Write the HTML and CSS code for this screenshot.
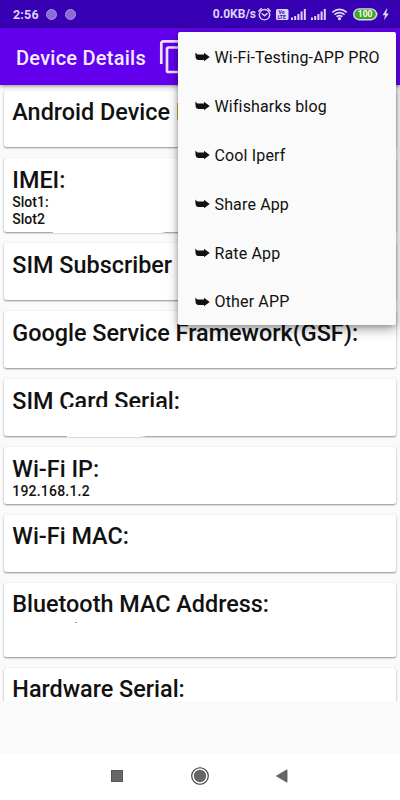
FILE: index.html
```
<!DOCTYPE html>
<html lang="en">
<head>
<meta charset="utf-8">
<title>Device Details</title>
<link rel="stylesheet" href="styles.css">
</head>
<body>
<div class="phone">
  <header class="status">
    <span class="time">2:56</span>
    <i class="dot"></i><i class="dot"></i>
    <span class="rate">0.0KB/s</span>
    <svg class="status-icons" viewBox="0 0 134 28" width="134" height="28">
      <g fill="none" stroke="#ddd5fb" stroke-width="1.4" stroke-linecap="round">
        <circle cx="6.500" cy="14.7" r="5.200"/>
        <path d="M.8 11 3.4 8.600M12.300 11 9.700 8.600M4.100 13.8 6.500 15.8 9.100 13.6"/>
      </g>
      <rect x="18" y="9" width="12.500" height="11" rx="1.500" fill="#ddd5fb"/>
      <g class="volte"><text x="20.500" y="14.300">Vo</text><text x="19.700" y="18.800">LTE</text></g>
      <g fill="#ddd5fb">
        <path d="M33 17.500h2V20h-2zM36.200 16h2v4h-2zM39.400 14h2v6h-2zM42.600 11.500h2V20h-2zM45.800 9h2v11h-2z"/>
        <path d="M53 17.500h2V20h-2zM56.200 16h2v4h-2zM59.400 14h2v6h-2zM62.600 11.500h2V20h-2zM65.800 9h2v11h-2z"/>
        <circle cx="81.500" cy="18.700" r="1.600"/>
        <path d="M128.500 8.800 124.500 15.200h2.600l-1.200 5 5-6.800h-2.800l1.200-4.600z"/>
      </g>
      <g fill="none" stroke="#ddd5fb" stroke-width="1.700">
        <path d="M74.200 12.300q7.300-5.800 14.600 0M76.400 14.600q5.100-4 10.200 0M78.600 16.800q2.900-2.200 5.800 0"/>
      </g>
      <rect x="95.700" y="8.900" width="22.800" height="10.800" rx="5.400" fill="#3eaa16" stroke="#ddd5fb" stroke-width="1.400"/>
      <path d="M119.500 12q1.200 2.200 0 4.400z" fill="#ddd5fb"/>
      <text class="level" x="107.100" y="17.400" text-anchor="middle">100</text>
    </svg>
  </header>
  <div class="appbar">
    <h1>Device Details</h1>
    <svg viewBox="0 0 30 36" width="30" height="36" fill="none" stroke="#ece2ff" stroke-width="2.700">
      <path d="M2.300 25V4.500q0-2.200 2.200-2.200H22"/><rect x="8" y="8.500" width="19" height="24.500" rx="1.500"/>
    </svg>
  </div>
  <main class="list">
    <section class="card"><h2>Android Device ID:</h2></section>
    <section class="card tall imei"><h2>IMEI:</h2><p>Slot1:</p><p>Slot2</p></section>
    <section class="card"><h2>SIM Subscriber ID:</h2></section>
    <section class="card"><h2>Google Service Framework(GSF):</h2></section>
    <section class="card sim"><h2>SIM Card Serial:</h2></section>
    <section class="card"><h2>Wi-Fi IP:</h2><p class="ip">192.168.1.2</p></section>
    <section class="card"><h2>Wi-Fi MAC:</h2></section>
    <section class="card tall speck"><h2>Bluetooth MAC Address:</h2></section>
    <section class="card"><h2>Hardware Serial:</h2></section>
  </main>
  <div class="spacer"></div>
  <footer class="nav">
    <svg viewBox="0 0 400 47" width="400" height="47">
      <rect x="111.500" y="17.500" width="11" height="11" fill="#666" stroke="#555"/>
      <circle cx="200" cy="23" r="8.300" fill="none" stroke="#333" stroke-width="1.100"/>
      <circle cx="200" cy="23" r="6.200" fill="#666"/>
      <path d="M276.500 23 287 16.800v12.400z" fill="#666" stroke="#555" stroke-width=".8"/>
    </svg>
  </footer>
  <svg width="0" height="0" class="defs"><symbol id="arrow" viewBox="0 0 15 10">
    <path d="M.3.500 1.800 2Q2.500 2.600 4 2.600H9V.8L14.700 5 9 9.200V7.900H3.200Q.9 7.900.6 5.600z"/>
  </symbol></svg>
  <ul class="menu">
    <li><svg class="arrow"><use href="#arrow"/></svg><span>Wi-Fi-Testing-APP PRO</span></li>
    <li><svg class="arrow"><use href="#arrow"/></svg><span>Wifisharks blog</span></li>
    <li><svg class="arrow"><use href="#arrow"/></svg><span>Cool Iperf</span></li>
    <li><svg class="arrow"><use href="#arrow"/></svg><span>Share App</span></li>
    <li><svg class="arrow"><use href="#arrow"/></svg><span>Rate App</span></li>
    <li><svg class="arrow"><use href="#arrow"/></svg><span>Other APP</span></li>
  </ul>
</div>
</body>
</html>
```
FILE: styles.css
```
* { box-sizing: border-box; margin: 0; padding: 0; }
body { font-family: Roboto, "Liberation Sans", sans-serif; color: #111; background: #fafafa; }
.phone { position: relative; width: 400px; height: 800px; display: flex; flex-direction: column; overflow: hidden; }
.status { height: 28px; flex: none; background: #3700b3; color: #ddd5fb; display: flex; align-items: center; padding-left: 13px; padding-right: 8px; font-weight: 700; }
.time { font-size: 12.5px; letter-spacing: .2px; width: 33px; }
.dot { width: 11px; height: 11px; border-radius: 50%; background: #8a6bd6; border: 1px solid #a994e4; margin-right: 7.5px; }
.rate { margin-left: auto; margin-right: 2px; font-size: 12px; }
.status-icons { flex: none; }
.volte { font-size: 5px; font-weight: 700; fill: #3700b3; }
.level { font-size: 8.5px; font-weight: 700; fill: #fff; }
.appbar { height: 57px; flex: none; background: #6200ee; display: flex; align-items: center; padding-left: 16px; position: relative; box-shadow: 0 1px 4px rgba(0,0,0,.45); }
.appbar h1 { font-size: 20px; letter-spacing: .25px; font-weight: 500; color: #f3edff; width: 143px; white-space: nowrap; padding-top: 3px; }
.list { height: 616px; flex: none; padding: 5.5px 4px 0; display: flex; flex-direction: column; gap: 11px; overflow: hidden; }
.card { height: 56.9px; flex: none; position: relative; background: #fff; border-radius: 2.5px; padding: 7.5px 8.3px; box-shadow: 0 1px 2px rgba(0,0,0,.42), 0 0 1px rgba(0,0,0,.15); }
.card.tall { height: 74px; }
.card h2 { font-size: 23.4px; line-height: 28px; font-weight: 500; white-space: nowrap; }
.card p { font-size: 14px; line-height: 17px; font-weight: 500; }
.card .ip { letter-spacing: .2px; }
.imei::after { content: ""; position: absolute; left: 44px; top: 31px; width: 126px; height: 43.500px; background: #fff; border-radius: 0 0 14px 0; clip-path: polygon(0 0, 100% 0, 100% 100%, 5px 100%); }
.sim::after { content: ""; position: absolute; left: 63px; top: 27.5px; width: 98px; height: 30px; background: #fff; border-radius: 0 0 26px 0; }
.speck::after { content: ""; position: absolute; left: 71px; top: 39px; width: 2px; height: 1px; background: #999; }
.spacer { flex: 1; }
.nav { height: 47px; flex: none; background: #fff; }
.nav svg { display: block; }
.defs { position: absolute; }
.menu { position: absolute; left: 178px; top: 32px; width: 218px; height: 293px; list-style: none; background: #fafafa; border-radius: 2px; padding-top: 1px; box-shadow: 0 5px 12px rgba(0,0,0,.3), 0 1px 5px rgba(0,0,0,.25); }
.menu li { height: 48.9px; display: flex; align-items: center; padding-left: 17px; gap: 4.5px; font-size: 16px; letter-spacing: .15px; white-space: nowrap; }
.arrow { width: 15px; height: 10px; fill: #111; flex: none; }
```
